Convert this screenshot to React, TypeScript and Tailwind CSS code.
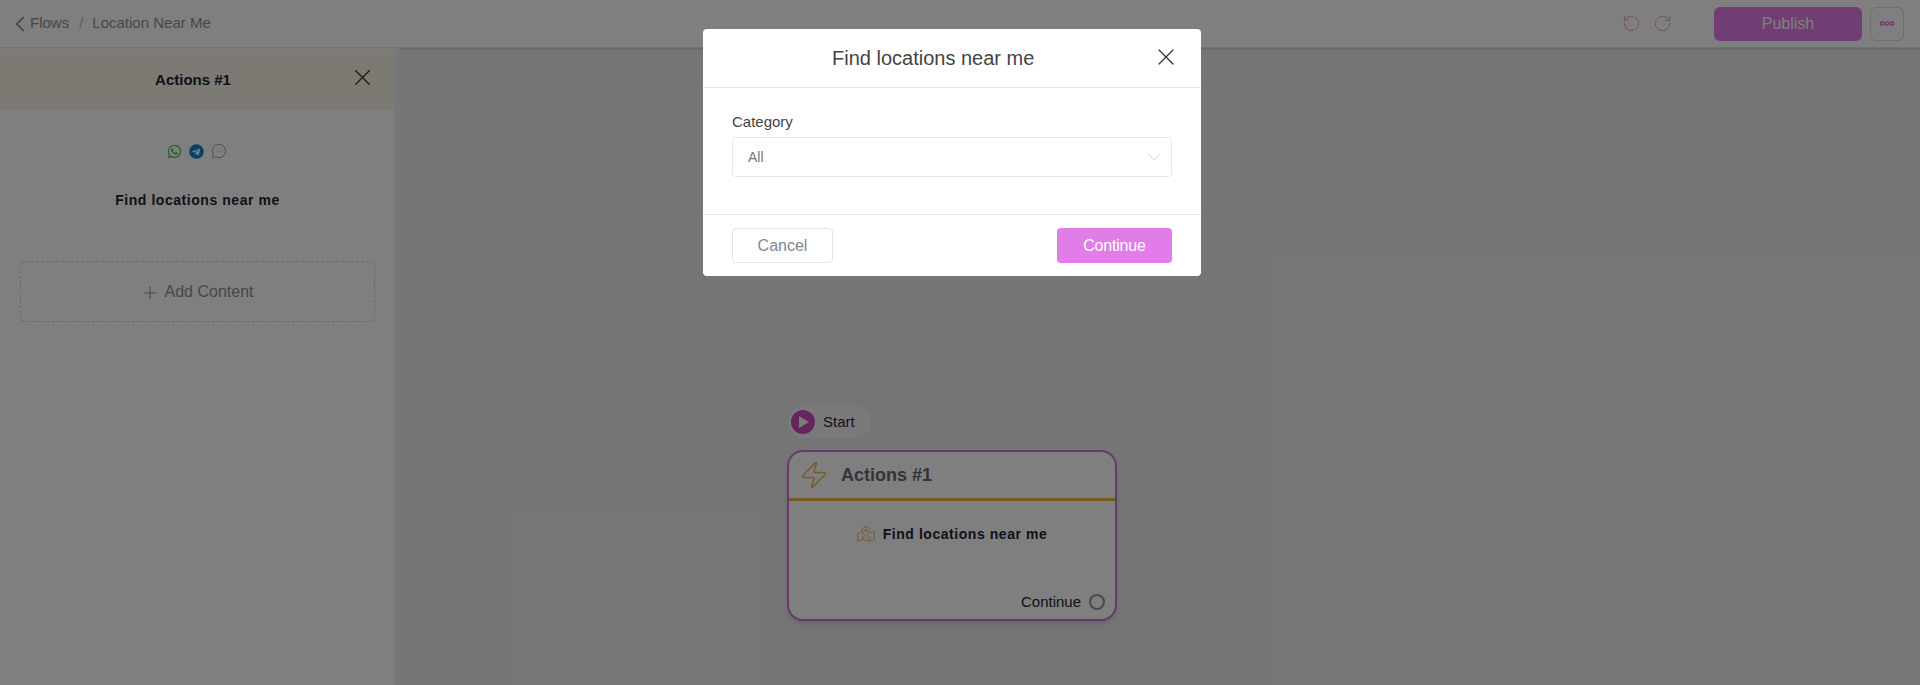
import { ChevronDown, ChevronLeft, MessageCircleMore, Plus, RotateCcw, RotateCw, X, Zap } from "lucide-react";
import { FaTelegram, FaWhatsapp } from "react-icons/fa";

function MapPinIcon() {
  return (
    <svg viewBox="0 0 24 21" className="w-[18px] h-[16px] text-[#e8b56c]" fill="none" stroke="currentColor" strokeWidth="1.3" strokeLinejoin="round" strokeLinecap="round">
      <path d="M12 1a5 5 0 0 0-5 5c0 3.4 5 8 5 8s5-4.6 5-8a5 5 0 0 0-5-5z" />
      <circle cx="12" cy="6" r="1.6" />
      <path d="M6.5 7.5 1 9.5V20l7-2.5 8 2.5 7-2.5V7l-4.5 1.5" />
      <path d="M8 13v4.5M16 14v6" />
    </svg>
  );
}

function TopBar() {
  return (
    <header className="h-12 shrink-0 bg-white flex items-center pl-[7px] pr-4 border-b border-[#e4e6ea] shadow-sm">
      <ChevronLeft className="w-[26px] h-[26px] text-[#7b8088]" strokeWidth={1.5} />
      <span className="text-[15px] text-[#8b8f96] -ml-[3px]">Flows</span>
      <span className="text-[15px] text-[#b3b6bb] ml-[10px] mr-[9px]">/</span>
      <span className="text-[15px] text-[#8b8f96]">Location Near Me</span>
      <div className="ml-auto flex items-center">
        <RotateCcw className="w-[19px] h-[19px] text-[#e8a0e0]" strokeWidth={1.25} />
        <RotateCw className="w-[19px] h-[19px] text-[#e8a0e0] ml-3" strokeWidth={1.25} />
        <button className="ml-[42px] w-[148px] h-[34px] rounded-md bg-[#e27ce8] text-white text-base">Publish</button>
        <button className="ml-2 w-[34px] h-[34px] rounded-md border border-[#dcdde1] flex items-center justify-center">
          <svg viewBox="0 0 18 6" className="w-[16px] h-[5px] text-[#d070d8]" fill="none" stroke="currentColor" strokeWidth="1.6">
            <circle cx="3" cy="3" r="2" />
            <circle cx="9" cy="3" r="2" />
            <circle cx="15" cy="3" r="2" />
          </svg>
        </button>
      </div>
    </header>
  );
}

function Sidebar() {
  return (
    <aside className="w-[400px] shrink-0 bg-white border-r-[5px] border-[#eceef1] flex flex-col">
      <div className="h-[61px] mt-[1px] pt-[1px] bg-[#f8f4e6] flex items-center relative">
        <span className="w-full text-center text-[15px] font-bold text-[#1f2430] pr-[9px]">Actions #1</span>
        <X className="absolute right-[19px] top-[15px] w-[27px] h-[27px] text-[#333]" strokeWidth={1.1} />
      </div>
      <div className="flex justify-center items-center gap-[7px] mt-[33px] pr-[1px]">
        <FaWhatsapp className="w-[15px] h-[15px] text-[#35b34a]" />
        <FaTelegram className="w-[15px] h-[15px] text-[#0a85c9]" />
        <MessageCircleMore className="w-[16px] h-[16px] text-[#a0a3a8]" strokeWidth={1.5} />
      </div>
      <div className="text-center text-[14px] font-bold text-[#1f2430] tracking-[0.55px] mt-[31px]">Find locations near me</div>
      <button className="mx-5 mt-[50px] h-[61px] border border-dashed border-[#c3d8f2] rounded-md flex items-center justify-center gap-[5px] pr-[2px] text-[#8b8f96] text-base">
        <Plus className="w-5 h-5 mt-[3px]" strokeWidth={1.25} />
        Add Content
      </button>
    </aside>
  );
}

function FlowNode() {
  return (
    <>
      <div className="absolute left-[388px] top-[358px] w-[83px] h-8 rounded-full bg-[#f4f5f7] flex items-center pl-[3px]">
        <span className="w-6 h-6 rounded-full bg-[#cc4bb8] flex items-center justify-center">
          <span className="w-0 h-0 ml-[2px] border-y-[6px] border-y-transparent border-l-[10px] border-l-[#f4f5f7]" />
        </span>
        <span className="ml-[8px] text-[15px] text-[#1f2430]">Start</span>
      </div>
      <div className="absolute left-[387px] top-[402px] w-[330px] h-[171px] rounded-2xl border-2 border-[#d66be0] bg-white shadow-md flex flex-col">
        <div className="h-[46px] border-b-[3px] border-[#f0b43c] box-content flex items-center pl-[10px] rounded-t-2xl">
          <Zap className="w-[30px] h-[30px] text-[#e8b95c]" strokeWidth={1.25} />
          <span className="ml-[12px] text-lg font-bold text-[#666a72]">Actions #1</span>
        </div>
        <div className="flex items-center justify-center gap-[8px] mt-[23px]">
          <MapPinIcon />
          <span className="text-sm font-bold tracking-[0.55px] text-[#1f2430]">Find locations near me</span>
        </div>
        <div className="mt-auto mb-[6px] flex items-center justify-end pr-[10px]">
          <span className="text-[15px] text-[#1f2430]">Continue</span>
          <span className="ml-2 w-4 h-4 rounded-full border-2 border-[#8a93a5]" />
        </div>
      </div>
    </>
  );
}

function Modal() {
  return (
    <div className="absolute inset-0 bg-black/50 flex items-start">
      <div className="ml-[703px] mt-[29px] w-[498px] h-[247px] bg-white rounded flex flex-col">
        <div className="h-[59px] shrink-0 border-b border-[#e2e5ea] flex items-center relative pb-[1px]">
          <span className="ml-[129px] text-xl text-[#444]">Find locations near me</span>
          <X className="absolute right-[21px] top-[14px] w-[28px] h-[28px] text-[#333]" strokeWidth={1.1} />
        </div>
        <div className="h-[127px] shrink-0 border-b border-[#e2e5ea] px-[29px] pt-[24px]">
          <label className="block text-[15px] leading-[20px] text-[#444]">Category</label>
          <div className="mt-[5px] h-10 w-[440px] border border-[#e4e6ea] rounded flex items-center pl-[15px] pr-[6px]">
            <span className="text-sm text-[#777]">All</span>
            <ChevronDown className="ml-auto w-[22px] h-[22px] text-[#c8cacf]" strokeWidth={1} />
          </div>
        </div>
        <div className="flex-1 px-[29px] pt-[13px] flex items-start justify-between">
          <button className="w-[101px] h-[35px] rounded border border-[#dfe5ec] text-base text-[#7f8791]">Cancel</button>
          <button className="w-[115px] h-[35px] rounded bg-[#e27ce8] text-base text-white tracking-[-0.2px]">Continue</button>
        </div>
      </div>
    </div>
  );
}

export default function App() {
  return (
    <div className="relative w-[1920px] h-[685px] overflow-hidden flex flex-col bg-[#e9ebef] font-['Liberation_Sans',Arial,sans-serif]">
      <TopBar />
      <div className="flex-1 flex min-h-0">
        <Sidebar />
        <main className="relative flex-1">
          <FlowNode />
        </main>
      </div>
      <Modal />
    </div>
  );
}
